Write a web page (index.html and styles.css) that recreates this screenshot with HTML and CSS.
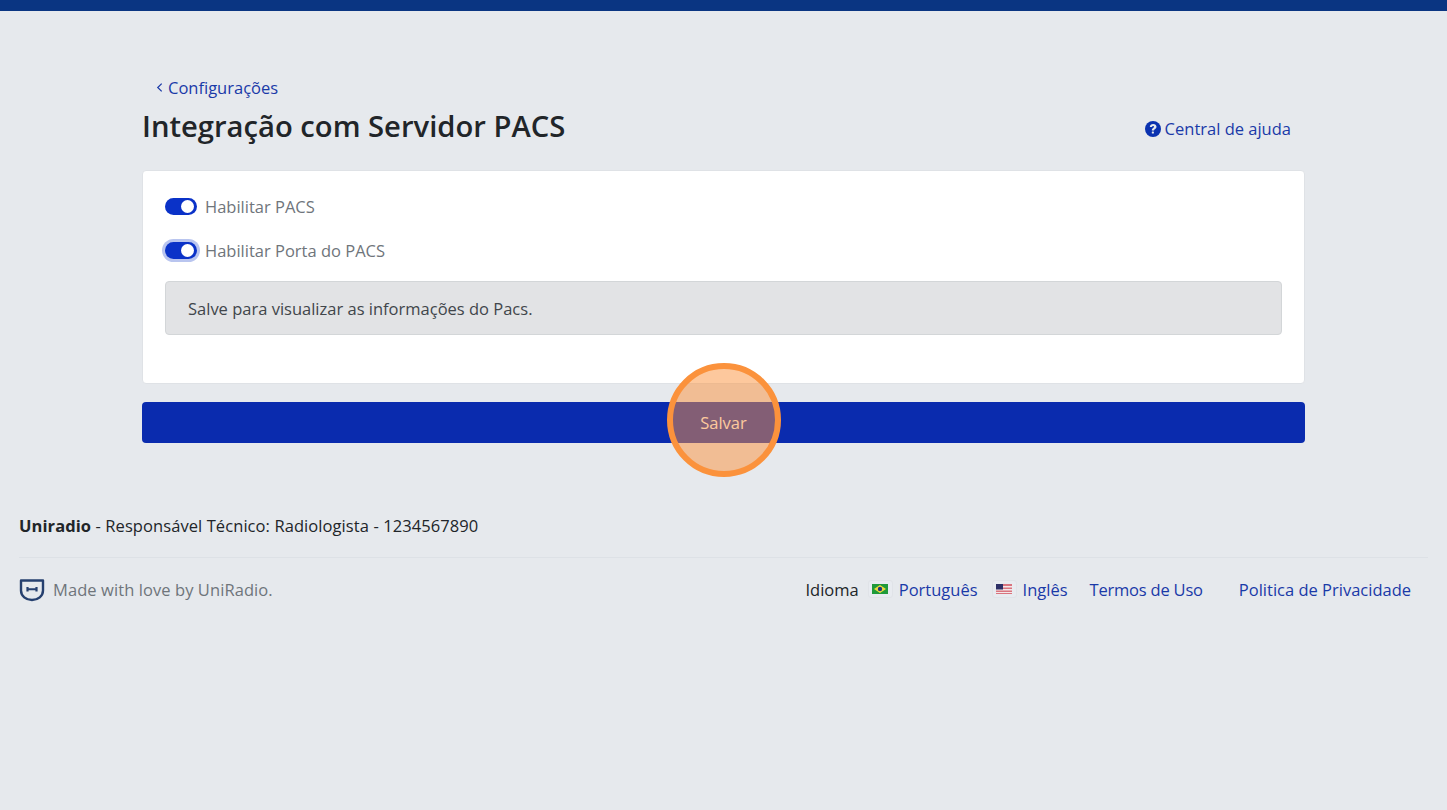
FILE: index.html
```html
<!DOCTYPE html>
<html lang="pt-BR">
<head>
<meta charset="utf-8">
<title>Integração com Servidor PACS</title>
<link rel="stylesheet" href="styles.css">
</head>
<body>
<div class="topbar"></div>
<main class="page">
  <a class="back" href="#"><svg class="chev" viewBox="0 0 8 12" width="7" height="11"><path d="M6.500 1.500 2 6l4.500 4.500" fill="none" stroke="currentColor" stroke-width="1.400"/></svg>Configurações</a>
  <div class="head">
    <h1>Integração com Servidor PACS</h1>
    <a class="help" href="#"><svg viewBox="0 0 16 16" width="16" height="16"><circle cx="8" cy="8" r="8" fill="#0a32b0"/><path d="M4.800 6.100C4.900 4.200 6.300 3 8.200 3c1.900 0 3.300 1.200 3.300 2.800 0 1.300-.8 1.900-1.600 2.400-.6.400-.8.600-.8 1.300H6.800c0-1.400.4-2 1.300-2.600.6-.4 1-.6 1-1.100 0-.5-.4-.8-1-.8-.7 0-1.100.4-1.200 1.100z" fill="#e6e9ed"/><rect x="6.800" y="10.400" width="2.100" height="2.200" rx=".5" fill="#e6e9ed"/></svg>Central de ajuda</a>
  </div>
  <section class="card">
    <label class="switch-row"><span class="switch"><span class="knob"></span></span>Habilitar PACS</label>
    <label class="switch-row"><span class="switch focus"><span class="knob"></span></span>Habilitar Porta do PACS</label>
    <div class="note">Salve para visualizar as informações do Pacs.</div>
  </section>
  <button class="save" type="button">Salvar</button>
</main>
<footer class="footer">
  <p class="resp"><strong>Uniradio</strong> - Responsável Técnico: Radiologista - 1234567890</p>
  <div class="foot-row">
    <div class="made">
      <svg class="shield" viewBox="0 0 26 24" width="26" height="24"><path d="M2 2.500h22v10c0 5.500-5 9.500-11 9.500S2 18 2 12.500z" fill="none" stroke="#26406f" stroke-width="2.400" stroke-linejoin="round"/><path d="M8.500 9v4.500M17.500 9v4.500M8.500 11.250h9" fill="none" stroke="#26406f" stroke-width="2.200"/></svg>
      <span>Made with love by UniRadio.</span>
    </div>
    <nav class="links">
      <span class="lang-label">Idioma</span>
      <span class="flag"><svg viewBox="0 0 16 10" width="16" height="10"><rect width="16" height="10" fill="#1f9a3a"/><path d="M8 1 14 5 8 9 2 5z" fill="#f0dc3a"/><circle cx="8" cy="5" r="2.200" fill="#1c3a80"/></svg></span>
      <a href="#" class="lang">Português</a>
      <span class="flag"><svg viewBox="0 0 16 10" width="16" height="10"><rect width="16" height="10" fill="#d9747f"/><rect y="2" width="16" height="1.500" fill="#f3e6e8"/><rect y="5" width="16" height="1.500" fill="#f3e6e8"/><rect y="8" width="16" height="1" fill="#f3e6e8"/><rect width="7" height="5.500" fill="#2c2f66"/></svg></span>
      <a href="#" class="lang">Inglês</a>
      <a href="#" class="terms">Termos de Uso</a>
      <a href="#" class="privacy">Politica de Privacidade</a>
    </nav>
  </div>
</footer>
<div class="spot"></div>
</body>
</html>
```

FILE: styles.css
```css
* { box-sizing: border-box; }
html, body { margin: 0; padding: 0; }
body {
  height: 810px;
  overflow: hidden;
  background: #e6e9ed;
  font-family: "Open Sans", "Noto Sans", sans-serif;
  font-size: 16.5px;
  color: #212529;
  position: relative;
}
a { color: #1a3aa8; text-decoration: none; }
.topbar { height: 11px; background: #0a3582; }
.page { margin: 0 142px; padding-top: 64px; }
.back { display: flex; align-items: center; gap: 5px; padding-left: 14px; height: 24px; }
.head { display: flex; justify-content: space-between; align-items: flex-start; height: 54px; padding-right: 14px; }
h1 { margin: 10px 0 0; font-size: 29.2px; line-height: 34px; font-weight: 600; }
.help { display: flex; align-items: center; gap: 4px; line-height: 24px; margin-top: 18px; }
.card {
  margin-top: 17px;
  height: 214px;
  background: #fff;
  border: 1px solid #dfe2e6;
  border-radius: 4px;
  padding: 13px 22px 0;
}
.switch-row { display: flex; align-items: center; gap: 8px; height: 44px; color: #6f757b; }
.switch { width: 32px; height: 17px; border-radius: 9px; background: #0a32c8; display: flex; align-items: center; justify-content: flex-end; padding-right: 3px; }
.switch.focus { box-shadow: 0 0 0 3px #b9c5ef; }
.knob { width: 13px; height: 13px; border-radius: 50%; background: #fff; }
.note {
  margin-top: 9px;
  height: 54px;
  display: flex;
  align-items: center;
  padding: 0 22px;
  background: #e2e3e5;
  border: 1px solid #d3d6d8;
  border-radius: 4px;
  color: #41464b;
}
.save {
  display: block;
  width: 100%;
  height: 41px;
  margin-top: 18px;
  border: 0;
  border-radius: 4px;
  background: #0a2bae;
  color: #fff;
  font: inherit;
}
.footer { margin: 71px 19px 0; }
.resp { margin: 0; height: 43px; line-height: 24px; letter-spacing: .08px; }
.resp strong { font-weight: 700; }
.foot-row { display: flex; justify-content: space-between; align-items: center; border-top: 1px solid #dde1e6; height: 65px; padding: 0 17px 2px 0; }
.made { display: flex; align-items: center; gap: 8px; color: #6f757b; letter-spacing: .08px; }
.shield { margin-top: 2px; }
.links { display: flex; align-items: center; }
.flag { display: inline-flex; align-items: center; justify-content: center; width: 25px; height: 18px; border: 1px solid #e0e3e8; border-radius: 3px; background: #e8ebf0; }
.lang-label { margin-right: 9px; }
.lang { margin-left: 6px; margin-right: 14px; }
.terms { margin-left: 8px; letter-spacing: -.2px; }
.privacy { margin-left: 36px; }
.spot {
  position: absolute;
  left: 667px;
  top: 363px;
  width: 114px;
  height: 114px;
  border-radius: 50%;
  border: 6px solid #fb923c;
  background: rgba(251, 146, 60, .5);
}
```
